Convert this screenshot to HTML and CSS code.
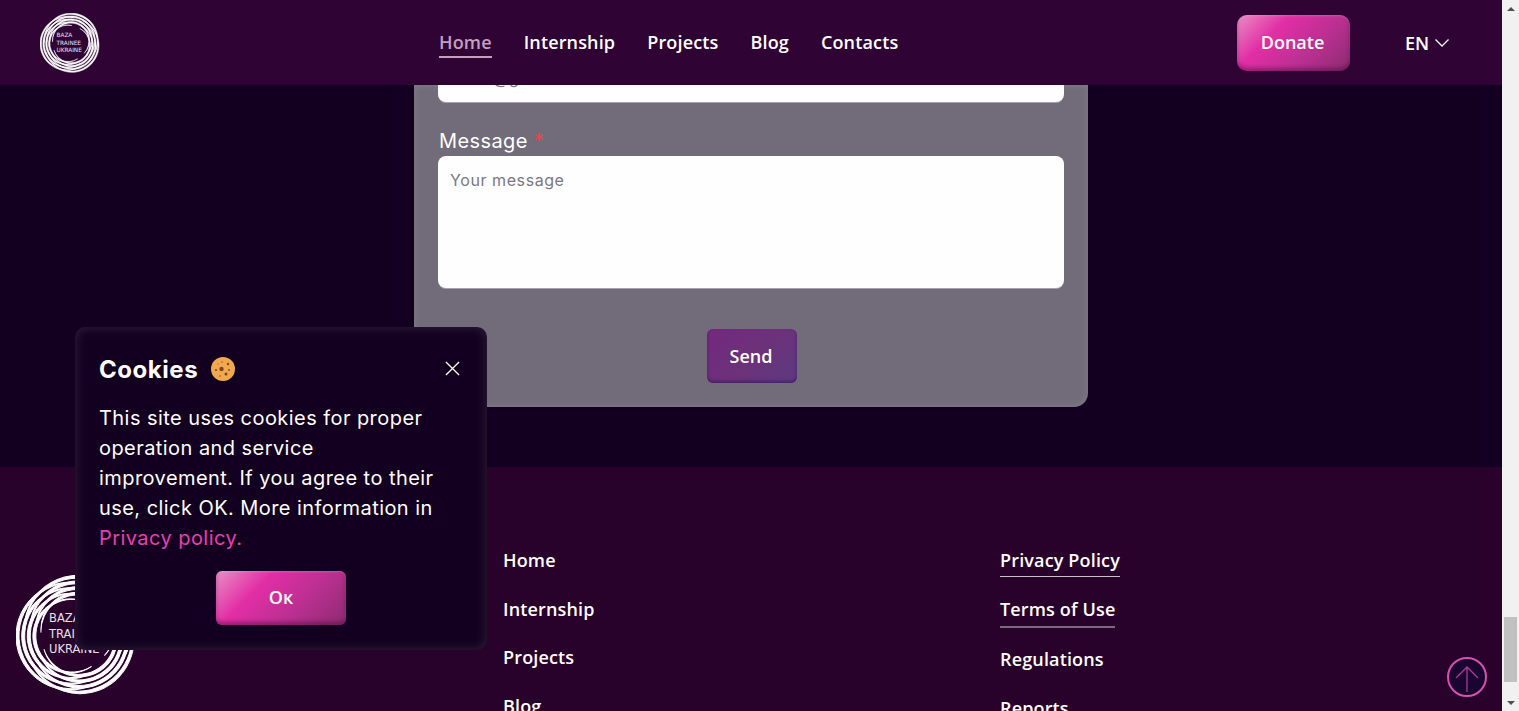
FILE: index.html
```html
<!DOCTYPE html>
<html lang="en">
<head>
<meta charset="utf-8">
<title>Baza Trainee Ukraine</title>
<link rel="stylesheet" href="styles.css">
</head>
<body>
<svg class="defs" width="0" height="0" aria-hidden="true">
  <defs>
    <path id="arcs" d="M84.500 7.500A58 58 0 1 0 84.500 112.500A57.060 57.060 0 1 1 84.500 7.500ZM82 12.900A52 52 0 1 0 82 107.100A51.070 51.070 0 1 1 82 12.900ZM79.400 18.300A46 46 0 1 0 79.400 101.700A45.080 45.080 0 1 1 79.400 18.300ZM76.900 23.750A40 40 0 1 0 76.900 96.250A39.090 39.090 0 1 1 76.900 23.750Z"/>
    <g id="swirl">
      <g fill="#fff" stroke="#fff" stroke-width="1">
        <use href="#arcs" transform="rotate(350 60 60) translate(-6 0) translate(60 60) scale(.93) translate(-60 -60)"/>
        <use href="#arcs" transform="rotate(110 60 60) translate(-6 0) translate(60 60) scale(.93) translate(-60 -60)"/>
        <use href="#arcs" transform="rotate(230 60 60) translate(-6 0) translate(60 60) scale(.93) translate(-60 -60)"/>
      </g>
      <text x="33" y="47" class="logo-text">BAZA</text>
      <text x="33" y="63" class="logo-text">TRAINEE</text>
      <text x="33" y="78" class="logo-text">UKRAINE</text>
    </g>
  </defs>
</svg>
<div class="viewport">
  <header class="header">
    <a class="logo-link" href="#"><svg class="logo-sm" viewBox="0 0 120 120"><use href="#swirl"/></svg></a>
    <nav class="nav">
      <a class="nav-link active" href="#">Home</a>
      <a class="nav-link" href="#">Internship</a>
      <a class="nav-link" href="#">Projects</a>
      <a class="nav-link" href="#">Blog</a>
      <a class="nav-link" href="#">Contacts</a>
    </nav>
    <button class="btn btn-donate">Donate</button>
    <div class="lang">EN
      <svg class="chev" viewBox="0 0 16 10"><path d="M1.500 1.500 8 8l6.500-6.500" fill="none" stroke="#fff" stroke-width="1.300"/></svg>
    </div>
  </header>
  <main class="main">
    <form class="form-panel">
      <div class="input input-cut"><span class="ph ph-cut">email@gmail.com</span></div>
      <label class="label">Message <span class="req">*</span></label>
      <div class="input textarea"><span class="ph">Your message</span></div>
      <div class="send-row"><button class="btn-send" type="button">Send</button></div>
    </form>
  </main>
  <footer class="footer">
    <svg class="logo-lg" viewBox="0 0 120 120"><use href="#swirl"/></svg>
    <ul class="foot-col col-a">
      <li><a href="#">Home</a></li>
      <li><a href="#">Internship</a></li>
      <li><a href="#">Projects</a></li>
      <li><a href="#">Blog</a></li>
    </ul>
    <ul class="foot-col col-b">
      <li><a class="ul" href="#">Privacy Policy</a></li>
      <li><a class="ul ul-dim" href="#">Terms of Use</a></li>
      <li><a href="#">Regulations</a></li>
      <li><a href="#">Reports</a></li>
    </ul>
  </footer>
  <a class="to-top" href="#" aria-label="Scroll to top">
    <svg viewBox="0 0 40 40" width="40" height="40"><path d="M20 35V10M9 21 20 10l11 11" fill="none" stroke="#b0379a" stroke-width="1.300"/></svg>
  </a>
  <aside class="cookie">
    <div class="cookie-head">
      <h2 class="cookie-title">Cookies</h2>
      <svg class="cookie-ico" viewBox="0 0 24 24">
        <circle cx="12" cy="12" r="12" fill="#f2a94e"/>
        <g fill="#7a4a1e"><circle cx="10.500" cy="12" r="2.200"/><circle cx="5" cy="13" r="1.100"/><circle cx="17" cy="7" r="1.200"/><circle cx="18" cy="13" r=".9"/><circle cx="15" cy="17" r="1.500"/><circle cx="9" cy="19" r=".7"/><circle cx="11" cy="5" r=".7"/><circle cx="7" cy="7" r=".6"/></g>
      </svg>
      <svg class="cookie-close" viewBox="0 0 16 16"><path d="M1 1l14 14M15 1 1 15" stroke="#fff" stroke-width="1.400"/></svg>
    </div>
    <p class="cookie-text">This site uses cookies for proper operation and service improvement. If you agree to their use, click OK. More information in <a class="cookie-link" href="#">Privacy policy.</a></p>
    <button class="btn btn-ok">Ок</button>
  </aside>
</div>
<div class="scrollbar">
  <span class="arrow-up"></span>
  <span class="track"><span class="thumb"></span></span>
  <span class="arrow-down"></span>
</div>
</body>
</html>
```
FILE: styles.css
```css
* { box-sizing: border-box; }
html, body { margin: 0; height: 100%; overflow: hidden; }
body { display: flex; font-family: "Open Sans", "Liberation Sans", sans-serif; background: #130020; color: #fff; }
a { color: inherit; text-decoration: none; }
.defs { position: absolute; }
.logo-text { font: 400 11.5px "DejaVu Sans", sans-serif; fill: #e8e2e8; }

.viewport { position: relative; width: 1502px; height: 711px; overflow: hidden; display: flex; flex-direction: column; }

.header { height: 85px; flex: none; background: #2f0435; display: flex; align-items: center; padding-left: 40px; }
.logo-link { display: block; width: 60px; height: 60px; margin-top: 1px; }
.logo-sm { display: block; width: 60px; height: 60px; }
.nav { display: flex; gap: 32px; margin-left: 339px; width: 798px; position: relative; top: 1px; }
.nav-link { font-size: 18px; font-weight: 600; line-height: 26px; padding-bottom: 2px; border-bottom: 1px solid transparent; letter-spacing: .15px; }
.nav-link.active { color: #c79ec0; border-bottom: 2px solid #c79ec0; padding-bottom: 1px; }
.btn { border: 0; color: #fff; font: 600 18px "Open Sans", sans-serif; background: linear-gradient(135deg, #e98fc6 0%, #e22ea5 32%, #b93091 65%, #8c2b70 100%); box-shadow: inset 0 -3px 4px rgba(70,0,60,.45), inset 0 1px 2px rgba(255,255,255,.2); padding: 0 0 2px; }
.btn-donate { width: 113px; height: 56px; border-radius: 10px; padding-right: 2px; }
.lang { margin-left: 55px; font-size: 18px; font-weight: 600; display: flex; align-items: center; gap: 5px; }
.chev { width: 16px; height: 10px; }

.main { height: 382px; flex: none; background: #130020; overflow: hidden; padding-left: 414px; }
.form-panel { width: 674px; height: 322px; background: #726b79; border-radius: 0 0 14px 14px; padding: 0 24px; display: flex; flex-direction: column; box-shadow: inset 0 0 8px rgba(255,255,255,.12); }
.input { width: 626px; background: #fefefe; border-radius: 8px; box-shadow: 0 1px 0 rgba(190,185,195,.7); }
.input-cut { height: 17px; border-radius: 0 0 8px 8px; overflow: hidden; }
.ph { font: 400 16px "Inter", "Lato", sans-serif; color: #7b7682; letter-spacing: .58px; display: block; padding: 12px; line-height: 24px; }
.ph-cut { padding: 0 12px; margin-top: -19px; }
.label { font: 400 20px "Inter", "Lato", sans-serif; letter-spacing: .4px; line-height: 28px; margin-top: 25px; height: 29px; padding-left: 1px; }
.req { color: #e5484d; }
.textarea { height: 132px; }
.send-row { display: flex; justify-content: center; margin-top: 41px; padding-left: 2px; }
.btn-send { width: 90px; height: 54px; border: 0; border-radius: 6px; color: #fff; font: 600 18px "Open Sans", sans-serif; padding: 0 2px 0 0; background: linear-gradient(135deg, #74287f 0%, #6b3279 55%, #5b3a80 100%); box-shadow: inset 0 -2px 3px rgba(50,10,90,.5); }

.footer { flex: 1; background: #28022b; display: flex; position: relative; padding: 79px 0 0 16px; }
.logo-lg { width: 120px; height: 120px; flex: none; margin-top: 29px; }
.foot-col { list-style: none; margin: 0; padding: 0; font-size: 18px; font-weight: 600; letter-spacing: .15px; }
.foot-col li { height: 49px; line-height: 28px; }
.col-a { margin-left: 367px; width: 497px; }
.col-a li { height: 48.5px; }
.ul { display: inline-block; border-bottom: 1px solid #c8bfc9; padding-bottom: 2px; }
.ul-dim { border-bottom: 2px solid #7a6a7e; padding-bottom: 3px; }
.col-b li:nth-child(2) { height: 50px; }

.to-top { position: absolute; left: 1447px; top: 657px; width: 40px; height: 40px; border-radius: 50%; border: 2px solid #d94fae; background: #1a0530; display: flex; align-items: center; justify-content: center; }
.to-top svg { flex: none; }

.cookie { position: absolute; left: 75px; top: 327px; width: 412px; height: 323px; background: #130020; border-radius: 10px; box-shadow: inset 0 0 12px rgba(255,255,255,.13); padding: 24px; display: flex; flex-direction: column; }
.cookie-head { display: flex; align-items: center; height: 36px; }
.cookie-title { margin: 0; font: 700 24px "Inter", "Lato", sans-serif; letter-spacing: .55px; }
.cookie-ico { width: 24px; height: 24px; margin-left: 13px; }
.cookie-close { width: 15px; height: 15px; margin-left: auto; margin-right: 3px; margin-top: -2px; }
.cookie-text { margin: 16px 0 0; width: 352px; font: 400 20px/30px "Inter", "Lato", sans-serif; letter-spacing: .44px; }
.cookie-link { color: #e83fb0; }
.btn-ok { display: block; width: 130px; height: 54px; border-radius: 6px; margin: 18px auto 0; flex: none; }

.scrollbar { width: 17px; height: 711px; flex: none; background: #f1f1f1; display: flex; flex-direction: column; align-items: center; }
.arrow-up { width: 0; height: 0; border: 4px solid transparent; border-top: 0; border-bottom: 4px solid #505050; margin-top: 7px; }
.track { flex: 1; width: 100%; display: flex; align-items: flex-end; padding: 0 2px; margin-top: 6px; }
.thumb { width: 13px; height: 65px; background: #c1c1c1; margin-bottom: 19px; }
.arrow-down { width: 0; height: 0; border: 4px solid transparent; border-bottom: 0; border-top: 4px solid #505050; margin-bottom: 6px; }
```
